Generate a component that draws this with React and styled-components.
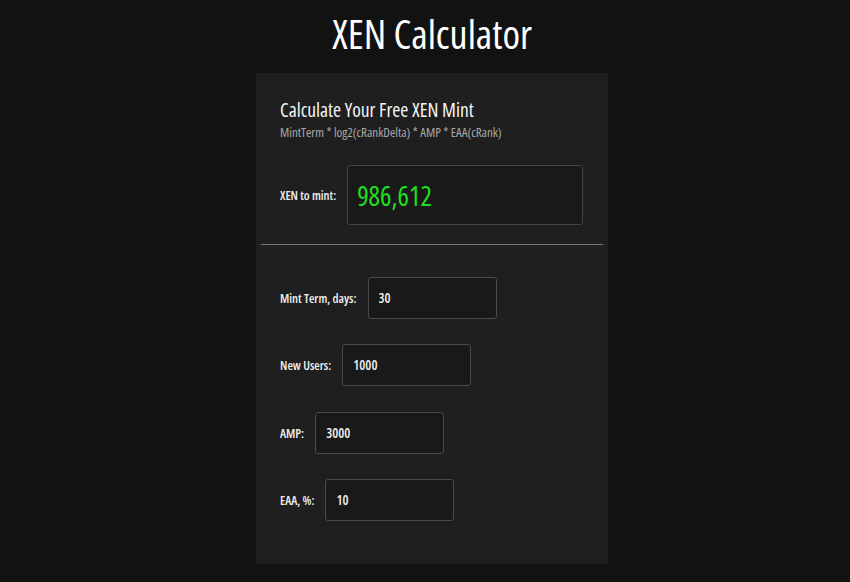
import React from "react";
import styled, { createGlobalStyle } from "styled-components";

const GlobalStyle = createGlobalStyle`
  html, body {
    margin: 0;
    padding: 0;
    background: #121212;
  }
  body {
    font-family: "Open Sans", "Roboto", sans-serif;
    font-stretch: 75%;
    color: #f2f2f2;
  }
`;

const Page = styled.div`
  width: 850px;
  height: 582px;
  box-sizing: border-box;
  padding-left: 14px;
  display: flex;
  flex-direction: column;
  align-items: center;
  overflow: hidden;
`;

const Title = styled.h1`
  margin: 0;
  padding-top: 9px;
  height: 73px;
  box-sizing: border-box;
  font-size: 40px;
  font-weight: 500;
  line-height: 50px;
  color: #ffffff;
`;

const Card = styled.div`
  width: 352px;
  box-sizing: border-box;
  background: #1f1f1f;
  padding: 24px 24px 43px;
`;

const Heading = styled.h2`
  margin: 0;
  font-size: 19.5px;
  font-weight: 500;
  line-height: 26px;
  color: #f4f4f4;
`;

const Formula = styled.div`
  font-size: 13px;
  font-weight: 500;
  line-height: 18px;
  color: #a8a8a8;
`;

const Row = styled.div`
  display: flex;
  align-items: center;
  gap: 11px;
  margin-top: ${(p) => p.$top}px;
`;

const Label = styled.label`
  flex-shrink: 0;
  white-space: nowrap;
  font-size: 12.5px;
  font-weight: 600;
  color: #f0f0f0;
`;

const ResultBox = styled.div`
  width: 236px;
  height: 60px;
  box-sizing: border-box;
  border: 1px solid #444;
  border-radius: 3px;
  background: #191919;
  display: flex;
  align-items: center;
  padding-left: 9px;
  font-size: 27px;
  font-weight: 500;
  color: #1fe01f;
`;

const Divider = styled.hr`
  margin: 19px -19px 0;
  border: 0;
  border-top: 1px solid #7a7a7a;
`;

const Input = styled.input`
  width: 129px;
  height: 42px;
  box-sizing: border-box;
  border: 1px solid #4a4a4a;
  border-radius: 3px;
  background: #191919;
  padding: 0 10px;
  font-family: inherit;
  font-stretch: 75%;
  font-size: 13.5px;
  font-weight: 600;
  color: #f0f0f0;
  outline: none;
`;

const fields = [
  { label: "Mint Term, days:", value: "30", top: 32 },
  { label: "New Users:", value: "1000", top: 25 },
  { label: "AMP:", value: "3000", top: 26 },
  { label: "EAA, %:", value: "10", top: 25 },
];

export default function App() {
  return (
    <Page>
      <GlobalStyle />
      <Title>XEN Calculator</Title>
      <Card>
        <Heading>Calculate Your Free XEN Mint</Heading>
        <Formula>MintTerm * log2(cRankDelta) * AMP * EAA(cRank)</Formula>
        <Row $top={24}>
          <Label>XEN to mint:</Label>
          <ResultBox>986,612</ResultBox>
        </Row>
        <Divider />
        {fields.map((f) => (
          <Row key={f.label} $top={f.top}>
            <Label>{f.label}</Label>
            <Input defaultValue={f.value} />
          </Row>
        ))}
      </Card>
    </Page>
  );
}
